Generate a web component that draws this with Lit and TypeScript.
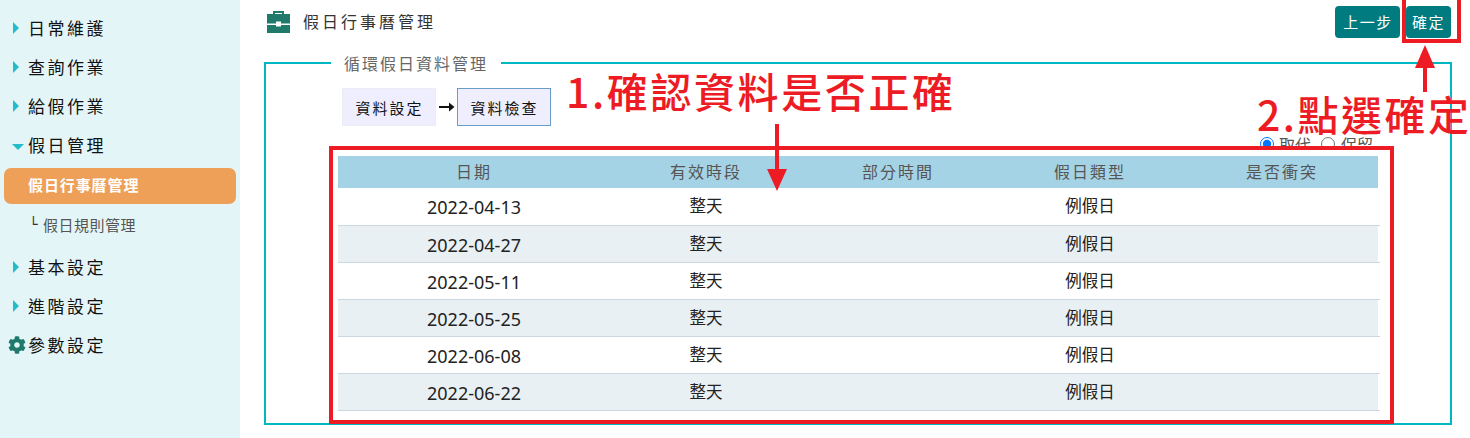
import { LitElement, html, css } from "lit";
import { customElement } from "lit/decorators.js";

const rows = ["2022-04-13", "2022-04-27", "2022-05-11", "2022-05-25", "2022-06-08", "2022-06-22"];
const heads = ["日期", "有效時段", "部分時間", "假日類型", "是否衝突"];

@customElement("app-root")
export class AppRoot extends LitElement {
  static styles = css`
    :host { display: block; position: relative; width: 1470px; height: 438px; overflow: hidden; background: #fff; font-family: "Noto Sans CJK TC", "Noto Sans", sans-serif; color: #212529; }
    .page { display: flex; height: 438px; }
    .side { width: 240px; flex: none; background: #e4f5f7; padding-top: 9px; box-sizing: border-box; display: flex; flex-direction: column; }
    .item { height: 39px; display: flex; align-items: center; font-size: 17px; letter-spacing: 2.5px; color: #111; position: relative; padding: 0 0 2px 28px; box-sizing: border-box; }
    .tri { position: absolute; left: 13px; top: 13px; width: 0; height: 0; border-left: 6px solid #22bccb; border-top: 6px solid transparent; border-bottom: 6px solid transparent; }
    .tri.down { left: 12px; top: 18px; border-left: 6px solid transparent; border-right: 6px solid transparent; border-top: 6px solid #22bccb; border-bottom: 0; }
    .gear { position: absolute; left: 8px; top: 10px; width: 18px; height: 18px; }
    .pill { margin: 3px 4px 0; height: 36px; flex: none; background: #ee9f58; border-radius: 7px; color: #fff; font-size: 15px; font-weight: 700; display: flex; align-items: center; padding: 0 0 3px 24px; box-sizing: border-box; letter-spacing: 0.9px; }
    .sub { height: 44px; flex: none; display: flex; align-items: center; padding: 0 0 3px 29px; box-sizing: border-box; font-size: 15px; letter-spacing: 0.5px; color: #555; }
    .sub i { font-family: "DejaVu Sans Mono", monospace; font-style: normal; font-size: 14px; line-height: 18px; letter-spacing: 0; position: relative; top: -1px; color: #333; width: 14px; flex: none; }
    .main { flex: 1; min-width: 0; padding-left: 24px; box-sizing: border-box; }
    .head { height: 51px; display: flex; align-items: flex-start; width: 1187px; box-sizing: border-box; }
    .brief { width: 25px; height: 25px; margin: 9px 12px 0 2px; flex: none; }
    .title { font-size: 16px; letter-spacing: 3px; line-height: 24px; margin-top: 9px; color: #333; flex: 1; }
    .btn { height: 32px; margin-top: 6px; background: #007b80; color: #fff; border-radius: 4px; font-size: 15px; letter-spacing: 1.5px; display: flex; align-items: center; justify-content: center; box-sizing: border-box; padding-bottom: 1px; }
    .b1 { width: 65px; margin-right: 6px; padding-left: 1px; }
    .b2 { width: 45px; }
    fieldset { width: 1188px; height: 374px; margin: 0; padding: 13px 0 0; box-sizing: border-box; border: 2px solid #00b8c4; min-width: 0; }
    legend { margin-left: 65px; padding: 0 13px; font-size: 16px; letter-spacing: 2px; line-height: 24px; color: #666; height: 24px; }
    .body { padding-left: 76px; }
    .steps { display: flex; align-items: center; height: 38px; }
    .step { width: 94px; height: 38px; box-sizing: border-box; display: flex; align-items: center; justify-content: center; background: #eef; font-size: 15px; letter-spacing: 2px; color: #111; border: 1px solid #ececf4; padding: 1px 0 0 1px; }
    .step.cur { border: 1px solid #6a9cca; }
    .arr { width: 21px; height: 38px; flex: none; display: flex; align-items: center; justify-content: center; }
    .radios { height: 24px; margin-bottom: 6px; box-sizing: border-box; display: flex; align-items: flex-start; padding: 8px 0 0 918px; font-size: 16px; color: #555; line-height: 20px; overflow: hidden; }
    .radios label { display: flex; align-items: center; margin-right: 10px; white-space: nowrap; height: 20px; }
    .radios input { margin: 0 5px 0 0; width: 14px; height: 14px; }
    .radios label + label input { margin-right: 6px; }
    table { border-collapse: collapse; table-layout: fixed; width: 1042px; margin-left: -4px; }
    col.c1 { width: 272px; } col.cn { width: 192px; } col.cl { width: 194px; }
    th { background: #a5d3e6; font-weight: 400; font-size: 16px; letter-spacing: 2px; color: #555; height: 32px; padding: 0 0 2px; text-align: center; box-sizing: border-box; }
    th:last-child { background: linear-gradient(to right, #a5d3e6 192px, #fff 192px); padding-right: 2px; }
    td { height: 37px; padding: 0 0 2px; text-align: center; font-size: 16.5px; color: #222; border-bottom: 1px solid #ccd6de; box-sizing: border-box; }
    td.date { font-family: "Noto Sans", sans-serif; font-size: 18px; line-height: 24px; padding: 2px 0 0; }
    tr:nth-child(even) td { background: #e9f0f4; }
    tr:nth-child(even) td:last-child { background: linear-gradient(to right, #e9f0f4 192px, #fff 192px); }
    .over { position: absolute; color: #ed1c24; white-space: nowrap; font-weight: 500; line-height: 1; }
    .a1 { left: 566px; top: 70px; font-size: 41px; letter-spacing: 2.6px; }
    .a2 { left: 1257px; top: 93px; font-size: 41px; letter-spacing: 2.5px; }
    .box { position: absolute; border: 4px solid #ed1c24; box-sizing: border-box; }
    .bx1 { left: 329px; top: 146px; width: 1065px; height: 278px; }
    .bx2 { left: 1402px; top: -4px; width: 59px; height: 47px; }
    .ann { position: absolute; left: 0; top: 0; width: 1470px; height: 438px; pointer-events: none; }
  `;

  render() {
    return html`
      <div class="page">
        <nav class="side">
          <div class="item"><span class="tri"></span>日常維護</div>
          <div class="item"><span class="tri"></span>查詢作業</div>
          <div class="item"><span class="tri"></span>給假作業</div>
          <div class="item"><span class="tri down"></span>假日管理</div>
          <div class="pill">假日行事曆管理</div>
          <div class="sub"><i>└</i>假日規則管理</div>
          <div class="item"><span class="tri"></span>基本設定</div>
          <div class="item"><span class="tri"></span>進階設定</div>
          <div class="item">
            <svg class="gear" viewBox="0 0 512 512"><path fill="#1f7a6b" d="M487.4 315.7l-42.6-24.6c4.3-23.2 4.3-47 0-70.2l42.6-24.6c4.9-2.8 7.1-8.6 5.5-14-11.1-35.6-30-67.8-54.7-94.6-3.8-4.1-10-5.1-14.8-2.3L380.8 110c-17.9-15.4-38.5-27.3-60.8-35.1V25.8c0-5.6-3.9-10.5-9.4-11.7-36.7-8.2-74.3-7.8-109.2 0-5.5 1.2-9.4 6.1-9.4 11.7V75c-22.2 7.9-42.8 19.8-60.8 35.1L88.7 85.5c-4.9-2.8-11-1.9-14.8 2.3-24.7 26.7-43.6 58.9-54.7 94.6-1.7 5.4.6 11.2 5.5 14L67.3 221c-4.3 23.2-4.3 47 0 70.2l-42.6 24.6c-4.9 2.8-7.1 8.6-5.5 14 11.1 35.6 30 67.8 54.7 94.6 3.8 4.1 10 5.1 14.8 2.3l42.6-24.6c17.9 15.4 38.5 27.3 60.8 35.1v49.2c0 5.6 3.9 10.5 9.4 11.7 36.7 8.2 74.3 7.8 109.2 0 5.5-1.2 9.4-6.1 9.4-11.7v-49.2c22.2-7.9 42.8-19.8 60.8-35.1l42.6 24.6c4.9 2.8 11 1.9 14.8-2.3 24.7-26.7 43.6-58.9 54.7-94.6 1.5-5.5-.7-11.3-5.6-14.1zM256 336c-44.1 0-80-35.9-80-80s35.9-80 80-80 80 35.9 80 80-35.9 80-80 80z"/></svg>
            參數設定
          </div>
        </nav>
        <main class="main">
          <div class="head">
            <svg class="brief" viewBox="0 0 25 25">
              <path fill="none" stroke="#1f7a6b" stroke-width="2" d="M8 6V3h9v3"/>
              <rect x="1" y="5" width="23" height="9.5" fill="#1f7a6b"/>
              <rect x="1" y="16" width="23" height="8" fill="#1f7a6b"/>
              <rect x="10" y="12.5" width="5" height="5" fill="#fff"/>
            </svg>
            <div class="title">假日行事曆管理</div>
            <div class="btn b1">上一步</div>
            <div class="btn b2">確定</div>
          </div>
          <fieldset>
            <legend>循環假日資料管理</legend>
            <div class="body">
              <div class="steps">
                <div class="step">資料設定</div>
                <div class="arr"><svg width="16" height="10" viewBox="0 0 16 10"><path d="M0 5h12" stroke="#111" stroke-width="2"/><path d="M10 0.5l5.5 4.500-5.500 4.500z" fill="#111"/></svg></div>
                <div class="step cur">資料檢查</div>
              </div>
              <div class="radios">
                <label><input type="radio" name="m" checked />取代</label>
                <label><input type="radio" name="m" />保留</label>
              </div>
              <table>
                <colgroup><col class="c1" /><col class="cn" /><col class="cn" /><col class="cn" /><col class="cl" /></colgroup>
                <thead><tr>${heads.map((h) => html`<th>${h}</th>`)}</tr></thead>
                <tbody>
                  ${rows.map((d) => html`<tr><td class="date">${d}</td><td>整天</td><td></td><td>例假日</td><td></td></tr>`)}
                </tbody>
              </table>
            </div>
          </fieldset>
        </main>
      </div>
      <div class="over a1">1.確認資料是否正確</div>
      <div class="over a2">2.點選確定</div>
      <div class="box bx1"></div>
      <div class="box bx2"></div>
      <svg class="ann" viewBox="0 0 1470 438">
        <path d="M777 124v48" stroke="#ed1c24" stroke-width="4"/>
        <path d="M767 169h20l-10 22z" fill="#ed1c24"/>
        <path d="M1425 92V62" stroke="#ed1c24" stroke-width="4"/>
        <path d="M1415 68h20l-10 -23z" fill="#ed1c24"/>
      </svg>
    `;
  }
}
